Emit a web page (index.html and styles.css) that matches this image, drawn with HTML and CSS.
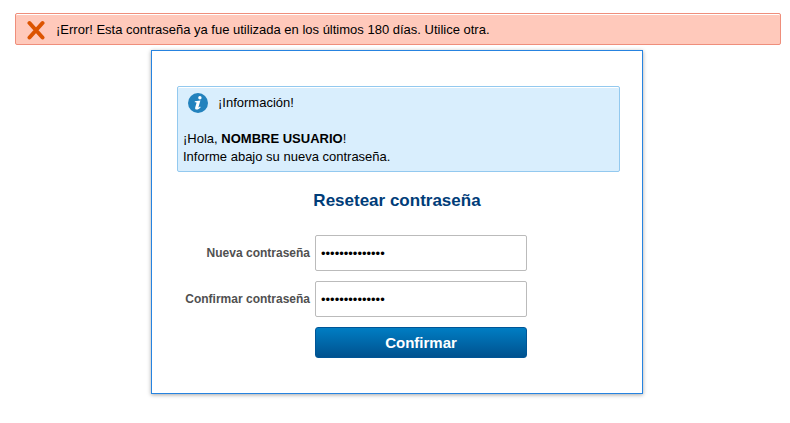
FILE: index.html
```
<!DOCTYPE html>
<html lang="es">
<head>
<meta charset="utf-8">
<meta name="viewport" content="width=device-width, initial-scale=1">
<title>Resetear contraseña</title>
<link rel="stylesheet" href="styles.css">
</head>
<body>
<div class="alert" role="alert">
  <svg class="alert-icon" viewBox="0 0 20 20" aria-hidden="true"><path d="M3.500 3 16.500 17.500M16.500 3 3.500 17.500"/></svg>
  <span>¡Error! Esta contraseña ya fue utilizada en los últimos 180 días. Utilice otra.</span>
</div>
<main class="card">
  <section class="info">
    <div class="info-title">
      <svg class="info-icon" viewBox="0 0 20 20" aria-hidden="true"><circle cx="10" cy="10" r="10"/><path d="M10.200 4.800a1.700 1.700 0 1 1 3.400 0 1.700 1.700 0 1 1-3.400 0zM6.900 8.200l5.500-.6-1.900 6.300c-.2.800.3.700 1.500-.4l.7.7c-1.300 1.600-2.700 2.300-4 2.300-1.400 0-1.800-.9-1.500-2.100l1.300-4.400c.1-.5-.1-.7-.7-.7H6.700z"/></svg>
      <span>¡Información!</span>
    </div>
    <p>¡Hola, <strong>NOMBRE USUARIO</strong>!<br>Informe abajo su nueva contraseña.</p>
  </section>
  <h1>Resetear contraseña</h1>
  <form class="form">
    <label for="new-password">Nueva contraseña</label>
    <input id="new-password" type="password" value="12345678901234" autocomplete="new-password">
    <label for="confirm-password">Confirmar contraseña</label>
    <input id="confirm-password" type="password" value="12345678901234" autocomplete="new-password">
    <button type="button">Confirmar</button>
  </form>
</main>
</body>
</html>
```
FILE: styles.css
```
* {
  box-sizing: border-box;
}

body {
  margin: 0;
  padding: 13px 11px 24px 15px;
  background: #fff;
  color: #000;
  font: 13px/18px "Liberation Sans", Arial, sans-serif;
}

.alert {
  display: flex;
  align-items: center;
  gap: 10px;
  margin-right: -2px;
  padding: 6px 10px 4px;
  border: 1px solid #ef8e7b;
  border-radius: 2px;
  background: #ffc9bb;
  box-shadow: inset 0 1px #fff;
}

.alert-icon {
  width: 20px;
  height: 20px;
  fill: none;
  stroke: #dc5400;
  stroke-width: 4;
  stroke-linecap: round;
}

.card {
  max-width: 492px;
  margin: 5px auto 0;
  padding: 35px 25px;
  border: 1px solid #2683e0;
  background: #fff;
  box-shadow: 0 1px 4px rgba(0, 0, 0, 0.35);
}

.info {
  margin-right: -3px;
  padding: 6px 5px 5px;
  border: 1px solid #93c9ef;
  border-radius: 2px;
  background: #d9eefd;
  box-shadow: inset 0 1px #fff;
}

.info-title {
  display: flex;
  align-items: center;
  gap: 10px;
  padding-left: 5px;
}

.info-icon {
  width: 20px;
  height: 20px;
  fill: #2382bd;
}

.info-icon path {
  fill: #fff;
}

.info p {
  margin: 17px 0 0;
}

h1 {
  margin: 19px 0 24px;
  color: #003c78;
  font-size: 17px;
  line-height: 20px;
  text-align: center;
}

.form {
  display: grid;
  grid-template-columns: 133px minmax(0, 212px);
  gap: 10px 5px;
  align-items: center;
}

.form label {
  color: #505050;
  font-size: 12px;
  font-weight: bold;
  text-align: right;
}

.form input {
  width: 100%;
  height: 36px;
  padding: 0 5px;
  border: 1px solid #bbb;
  border-radius: 2px;
  background: #fff;
  color: #000;
  font: 13px "Liberation Sans", Arial, sans-serif;
}

.form button {
  grid-column: 2;
  height: 31px;
  padding: 0;
  border: 1px solid #005596;
  border-radius: 3px;
  background: linear-gradient(#007dc3, #00528f);
  color: #fff;
  font: bold 15px "Liberation Sans", Arial, sans-serif;
}
```
